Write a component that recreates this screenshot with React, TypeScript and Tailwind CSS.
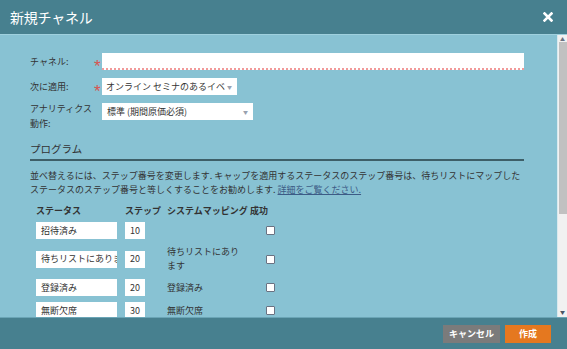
const font = { fontFamily: '"Noto Sans CJK JP", "Noto Sans", sans-serif' };

const rows = [
  { status: "招待済み", step: "10", map: "" },
  { status: "待ちリストにあります", step: "20", map: "待ちリストにあります" },
  { status: "登録済み", step: "20", map: "登録済み" },
  { status: "無断欠席", step: "30", map: "無断欠席" },
];

function Caret() {
  return <span className="text-[5px] text-gray-400 ml-auto">▼</span>;
}

function Box() {
  return <span className="block w-[9px] h-[9px] bg-white border border-gray-500 rounded-[1px]" />;
}

function Req() {
  return (
    <span className="h-[17px] text-[#d9534f] text-[17px] leading-[28px] overflow-visible" style={{ fontFamily: '"Liberation Sans", sans-serif' }}>
      *
    </span>
  );
}

export default function App() {
  return (
    <div className="w-[567px] h-[349px] flex flex-col overflow-hidden text-[#333] text-[9px] leading-[14px]" style={font}>
      {/* header */}
      <div className="h-[34px] shrink-0 bg-[#47808f] flex items-center px-[10px] text-white">
        <h1 className="text-[14px] leading-none tracking-[-0.2px]">新規チャネル</h1>
        <svg className="ml-auto mr-[4px]" width="10" height="10" viewBox="0 0 10 10">
          <path d="M1.5 1.5 L8.5 8.5 M8.5 1.5 L1.5 8.5" stroke="white" strokeWidth="2.6" strokeLinecap="square" />
        </svg>
      </div>

      {/* body */}
      <div className="flex-1 flex min-h-0 bg-[#88c2d3] border-t border-[#9fd0de]">
        <div className="flex-1 min-w-0 overflow-hidden pl-[30px] pr-[33px] pt-[18px]">
          <div className="grid grid-cols-[64px_8px_1fr] gap-y-[8px] items-center">
            <label>チャネル:</label>
            <Req />
            <div className="h-[17px] bg-white border-b-2 border-dotted border-[#f29a9a]" />

            <label>次に適用:</label>
            <Req />
            <div className="w-[135px] h-[17px] bg-white flex items-center pl-[4px] pr-[5px] whitespace-nowrap overflow-hidden">
              <span className="overflow-hidden">オンライン セミナのあるイベ</span>
              <Caret />
            </div>

            <label className="leading-[15px] self-start -mt-[2px]">アナリティクス<br />動作:</label>
            <span />
            <div className="w-[151px] h-[17px] bg-white flex items-center pl-[5px] pr-[5px] self-start">
              <span>標準 (期間原価必須)</span>
              <Caret />
            </div>
          </div>

          <h2 className="mt-[11px] text-[10.5px] leading-[14px] pb-[3px] border-b-2 border-[#3e5f68]">プログラム</h2>

          <p className="mt-[8px] leading-[14px] whitespace-nowrap">
            並べ替えるには、ステップ番号を変更します. キャップを適用するステータスのステップ番号は、待ちリストにマップした
            <br />
            ステータスのステップ番号と等しくすることをお勧めします.{" "}
            <a className="underline text-[#3c5b86]">詳細をご覧ください.</a>
          </p>

          <div className="mt-[7px] pl-[6px] grid grid-cols-[89px_42px_83px_20px] items-center font-bold">
            <span>ステータス</span>
            <span>ステップ</span>
            <span>システムマッピング</span>
            <span>成功</span>
          </div>

          <div className="pl-[6px] mt-[4px] flex flex-col gap-[6px]">
            {rows.map((r, i) => (
              <div key={i} className="grid grid-cols-[89px_42px_99px_9px] items-center min-h-[17px]">
                <div className="w-[81px] h-[17px] bg-white pl-[5px] flex items-center whitespace-nowrap overflow-hidden">{r.status}</div>
                <div className="w-[20px] h-[17px] bg-white pl-[5px] flex items-center">{r.step}</div>
                <div className="w-[75px] leading-[14px]">{r.map}</div>
                <Box />
              </div>
            ))}
          </div>
        </div>

        {/* scrollbar */}
        <div className="w-[10px] shrink-0 bg-[#f1f1f1] border-l border-[#d8e9ee] flex flex-col items-center">
          <span className="text-[5px] leading-[6px] text-gray-500 mt-[1px]">▲</span>
          <div className="w-[8px] h-[172px] bg-[#c1c1c1]" />
          <span className="mt-auto mb-[2px] text-[5px] leading-[6px] text-gray-600">▼</span>
        </div>
      </div>

      {/* footer */}
      <div className="h-[32px] shrink-0 bg-[#47808f] border-t border-[#6aa5b6] flex items-center justify-end gap-[5px] pr-[16px] font-bold text-white">
        <button className="w-[57px] h-[18px] bg-[#7b7b7b] text-[9px] leading-none">キャンセル</button>
        <button className="w-[46px] h-[18px] bg-[#e5781f] text-[9px] leading-none">作成</button>
      </div>
    </div>
  );
}
